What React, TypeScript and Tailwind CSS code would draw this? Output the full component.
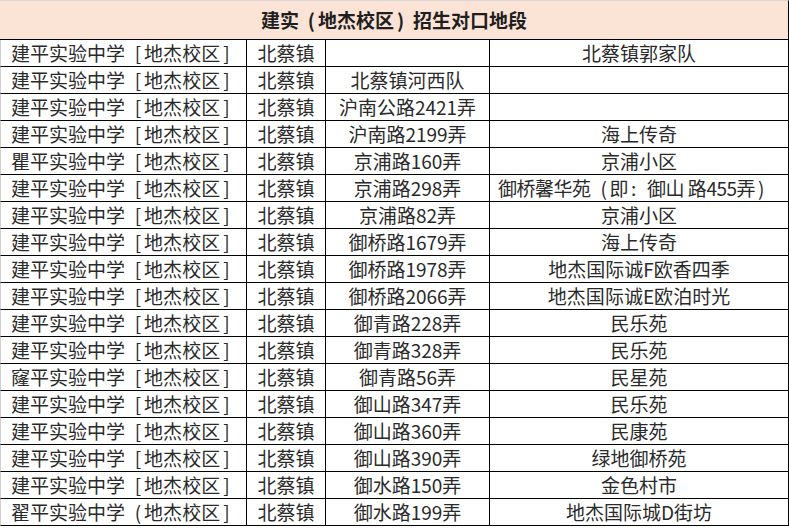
const rows: [string, string, string][] = [
  ["建平实验中学［地杰校区］", "", "北蔡镇郭家队"],
  ["建平实验中学［地杰校区］", "北蔡镇河西队", ""],
  ["建平实验中学［地杰校区］", "沪南公路2421弄", ""],
  ["建平实验中学［地杰校区］", "沪南路2199弄", "海上传奇"],
  ["瞿平实验中学［地杰校区］", "京浦路160弄", "京浦小区"],
  ["建平实验中学［地杰校区］", "京浦路298弄", "御桥馨华苑（即：御山 路455弄）"],
  ["建平实验中学［地杰校区］", "京浦路82弄", "京浦小区"],
  ["建平实验中学［地杰校区］", "御桥路1679弄", "海上传奇"],
  ["建平实验中学［地杰校区］", "御桥路1978弄", "地杰国际诚F欧香四季"],
  ["建平实验中学［地杰校区］", "御桥路2066弄", "地杰国际诚E欧泊时光"],
  ["建平实验中学［地杰校区］", "御青路228弄", "民乐苑"],
  ["建平实验中学［地杰校区］", "御青路328弄", "民乐苑"],
  ["窿平实验中学［地杰校区］", "御青路56弄", "民星苑"],
  ["建平实验中学［地杰校区］", "御山路347弄", "民乐苑"],
  ["建平实验中学［地杰校区］", "御山路360弄", "民康苑"],
  ["建平实验中学［地杰校区］", "御山路390弄", "绿地御桥苑"],
  ["建平实验中学［地杰校区］", "御水路150弄", "金色村市"],
  ["翟平实验中学（地杰校区］", "御水路199弄", "地杰国际城D街坊"],
];

// full-width punctuation drawn in a full em box, like the source font
function Wide({ text }: { text: string }) {
  return (
    <>
      {Array.from(text).map((ch, i) => {
        if (ch === "［" || ch === "（")
          return (
            <span key={i} className="inline-block w-[1em] text-right pr-[3px]">
              {ch === "［" ? "[" : "("}
            </span>
          );
        if (ch === "］" || ch === "）")
          return (
            <span key={i} className="inline-block w-[1em] text-left pl-[3px]">
              {ch === "］" ? "]" : ")"}
            </span>
          );
        if (ch === "：")
          return (
            <span key={i} className="inline-block w-[1em] text-left pl-[3px]">
              :
            </span>
          );
        return ch;
      })}
    </>
  );
}

export default function App() {
  return (
    <div
      className="w-[789px] h-[531px] bg-white text-[#2a2a2a]"
      style={{ fontFamily: '"Microsoft YaHei", "Noto Sans CJK SC", "Noto Sans", sans-serif' }}
    >
      <div className="h-[40px] bg-[#fbe3d6] border-t border-[#d9d9d9] border-b border-b-black border-r border-r-black flex items-center justify-center">
        <span className="text-[19px] font-bold text-[#1f1f1f] whitespace-nowrap">
          <Wide text="建实（地杰校区）招生对口地段" />
        </span>
      </div>
      {rows.map((r, i) => (
        <div key={i} className="grid grid-cols-[247px_79px_164px_299px] h-[27px] text-[19px] leading-[26px]">
          <div className="border-b border-r border-black pl-[10px] whitespace-nowrap overflow-hidden border-l border-l-[#cfcfcf]">
            <Wide text={r[0]} />
          </div>
          <div className="border-b border-r border-black text-center whitespace-nowrap">北蔡镇</div>
          <div className="border-b border-r border-black text-center whitespace-nowrap">{r[1]}</div>
          <div
            className={
              r[2].length > 12
                ? "border-b border-r border-black text-center whitespace-nowrap overflow-hidden tracking-[-0.5px] pr-[6px]"
                : "border-b border-r border-black text-center whitespace-nowrap overflow-hidden"
            }
          >
            <Wide text={r[2]} />
          </div>
        </div>
      ))}
    </div>
  );
}
